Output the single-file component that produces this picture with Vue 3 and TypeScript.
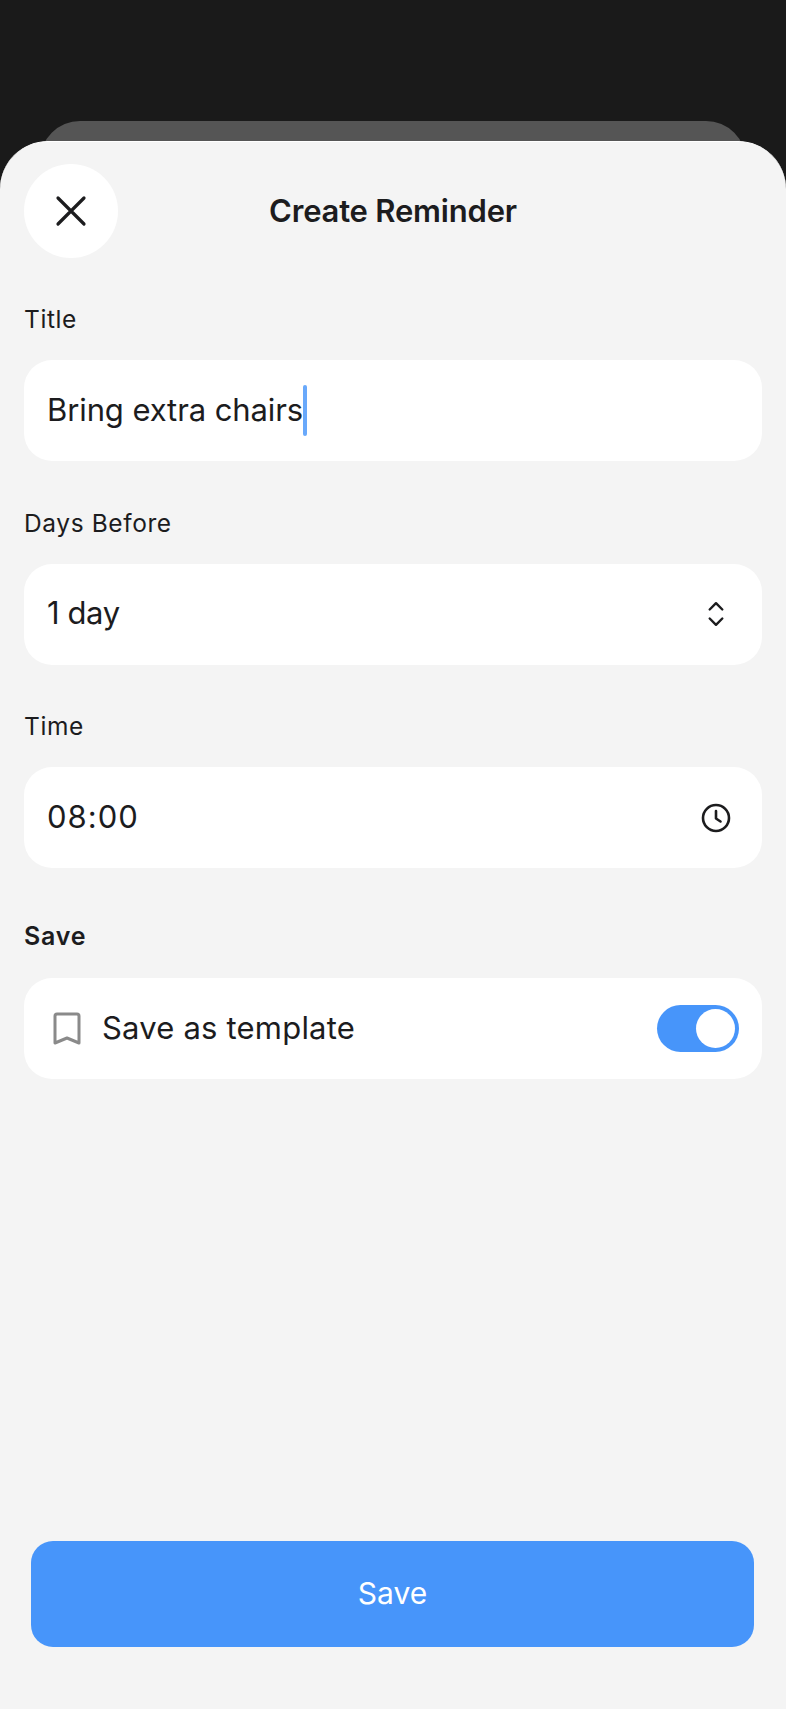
<script setup lang="ts">
import { ref } from 'vue'

const title = ref('Bring extra chairs')
const saveAsTemplate = ref(true)
</script>

<template>
  <div class="page">
    <div class="peek"></div>
    <main class="sheet">
      <header class="sheet-header">
        <button class="close-btn" type="button" aria-label="Close">
          <svg width="34" height="34" viewBox="0 0 34 34" fill="none" stroke="#1c1c1e" stroke-width="3.2" stroke-linecap="round">
            <path d="M4 4 30 30M30 4 4 30" />
          </svg>
        </button>
        <h1 class="sheet-title">Create Reminder</h1>
      </header>

      <section class="field">
        <label class="field-label">Title</label>
        <div class="field-box">
          <span class="field-value">{{ title }}</span>
          <span class="caret"></span>
        </div>
      </section>

      <section class="field">
        <label class="field-label">Days Before</label>
        <div class="field-box spread">
          <span class="field-value tight">1 day</span>
          <svg class="field-icon" width="32" height="32" viewBox="0 0 32 32" fill="none" stroke="#1c1c1e" stroke-width="2.4" stroke-linecap="round" stroke-linejoin="round">
            <path d="M9.700 11.500 16 5.200l6.300 6.300M9.700 20.500 16 26.800l6.300-6.300" />
          </svg>
        </div>
      </section>

      <section class="field">
        <label class="field-label">Time</label>
        <div class="field-box spread">
          <span class="field-value digits">08:00</span>
          <svg class="field-icon" width="32" height="32" viewBox="0 0 32 32" fill="none" stroke="#1c1c1e" stroke-width="2.600" stroke-linecap="round" stroke-linejoin="round">
            <circle cx="16" cy="16" r="13" />
            <path d="M16 9v7.500l4.500 3" />
          </svg>
        </div>
      </section>

      <section class="field">
        <label class="field-label strong">Save</label>
        <div class="field-box spread toggle-row">
          <div class="toggle-text">
            <svg width="28" height="33" viewBox="0 0 28 33" fill="none" stroke="#8a8a8a" stroke-width="3" stroke-linejoin="round">
              <path d="M2 4a2 2 0 0 1 2-2h20a2 2 0 0 1 2 2v27l-12-5-12 5z" />
            </svg>
            <span class="field-value wide">Save as template</span>
          </div>
          <div class="toggle" :class="{ on: saveAsTemplate }">
            <span class="knob"></span>
          </div>
        </div>
      </section>

      <button class="save-btn" type="button">Save</button>
    </main>
  </div>
</template>

<style>
html,
body {
  margin: 0;
  background: #1a1a1a;
}
</style>

<style scoped>
.page {
  height: 1709px;
  padding-top: 121px;
  box-sizing: border-box;
  display: flex;
  flex-direction: column;
  background: #1a1a1a;
  font-family: Inter, "Liberation Sans", sans-serif;
  color: #1c1c1e;
}

.peek {
  height: 70px;
  margin: 0 40px -50px;
  flex-shrink: 0;
  border-radius: 40px 40px 0 0;
  background: #555;
}

.sheet {
  position: relative;
  flex: 1;
  display: flex;
  flex-direction: column;
  box-sizing: border-box;
  padding: 22px 24px 62px;
  background: #f4f4f4;
  border-top: 1px solid #fff;
  border-radius: 48px 48px 0 0;
}

.sheet-header {
  position: relative;
  display: flex;
  align-items: center;
  height: 94px;
  margin-bottom: 47px;
}

.close-btn {
  width: 94px;
  height: 94px;
  padding: 0;
  border: 0;
  border-radius: 50%;
  background: #fff;
  display: flex;
  align-items: center;
  justify-content: center;
}

.sheet-title {
  position: absolute;
  left: 0;
  right: 0;
  margin: 0 0 2px;
  text-align: center;
  font-size: 31px;
  font-weight: 600;
  letter-spacing: -0.2px;
  color: #1c1c1e;
}

.field {
  margin-bottom: 47.500px;
}

.field-label {
  display: block;
  height: 29px;
  line-height: 29px;
  margin-bottom: 26px;
  font-size: 24.500px;
  letter-spacing: 0.6px;
}

.field-label.strong {
  margin-top: 6.500px;
  margin-bottom: 27px;
  font-size: 25px;
  font-weight: 600;
  letter-spacing: 0.800px;
}

.field-box {
  display: flex;
  align-items: center;
  height: 101px;
  padding: 0 23px;
  background: #fff;
  border-radius: 28px;
}

.spread {
  justify-content: space-between;
  padding-right: 30px;
}

.field-value {
  margin-bottom: 3px;
  font-size: 31px;
  line-height: 1;
  letter-spacing: -0.1px;
}

.field-value.tight {
  letter-spacing: -0.4px;
}

.field-value.digits {
  letter-spacing: 1px;
}

.field-value.wide {
  letter-spacing: 0.2px;
}

.caret {
  width: 4px;
  height: 51px;
  border-radius: 2px;
  background: #69a9fb;
}

.toggle-row {
  padding-left: 29px;
  padding-right: 23px;
}

.toggle-text {
  display: flex;
  align-items: center;
  gap: 21px;
}

.toggle {
  width: 82px;
  height: 47px;
  border-radius: 24px;
  background: #ccc;
  display: flex;
  align-items: center;
  padding: 0 4px;
  box-sizing: border-box;
}

.toggle.on {
  background: #4795fa;
  justify-content: flex-end;
}

.knob {
  width: 39px;
  height: 39px;
  border-radius: 50%;
  background: #fff;
}

.save-btn {
  height: 106px;
  margin: auto 8px 0 7px;
  padding: 0 0 3px;
  border: 0;
  border-radius: 22px;
  background: #4795fa;
  color: #fff;
  font-family: inherit;
  font-size: 30px;
}
</style>
